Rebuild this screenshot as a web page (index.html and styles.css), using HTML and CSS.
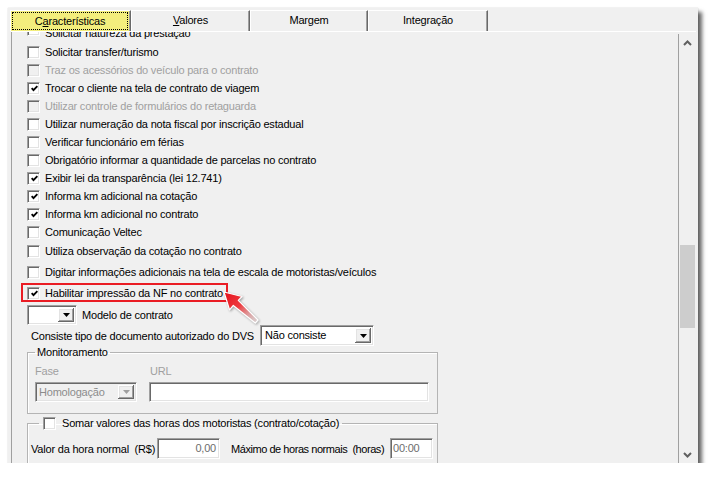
FILE: index.html
```html
<!DOCTYPE html>
<html lang="pt-BR">
<head>
<meta charset="utf-8">
<title>Características</title>
<link rel="stylesheet" href="styles.css">
</head>
<body>
<div class="window">
  <div class="tabs">
    <div class="tab active w1"><span class="focus">C<u>a</u>racterísticas</span></div>
    <div class="tab w2"><u>V</u>alores</div>
    <div class="tab w3">Margem</div>
    <div class="tab w4">Integração</div>
  </div>
  <div class="panel">
    <div class="viewport">
      <div class="content">
        <div class="row first"><span class="cb"></span><span class="t">Solicitar natureza da prestação</span></div>
        <div class="row"><span class="cb"></span><span>Solicitar transfer/turismo</span></div>
        <div class="row dis"><span class="cb off"></span><span>Traz os acessórios do veículo para o contrato</span></div>
        <div class="row"><span class="cb"><svg class="chk" viewBox="0 0 7 7"><polyline points="0.6,3.1 2.5,5.2 6.4,1.1"/></svg></span><span>Trocar o cliente na tela de contrato de viagem</span></div>
        <div class="row dis"><span class="cb off"></span><span>Utilizar controle de formulários do retaguarda</span></div>
        <div class="row"><span class="cb"></span><span>Utilizar numeração da nota fiscal por inscrição estadual</span></div>
        <div class="row"><span class="cb"></span><span>Verificar funcionário em férias</span></div>
        <div class="row"><span class="cb"></span><span>Obrigatório informar a quantidade de parcelas no contrato</span></div>
        <div class="row"><span class="cb"><svg class="chk" viewBox="0 0 7 7"><polyline points="0.6,3.1 2.5,5.2 6.4,1.1"/></svg></span><span>Exibir lei da transparência (lei 12.741)</span></div>
        <div class="row"><span class="cb"><svg class="chk" viewBox="0 0 7 7"><polyline points="0.6,3.1 2.5,5.2 6.4,1.1"/></svg></span><span>Informa km adicional na cotação</span></div>
        <div class="row"><span class="cb"><svg class="chk" viewBox="0 0 7 7"><polyline points="0.6,3.1 2.5,5.2 6.4,1.1"/></svg></span><span>Informa km adicional no contrato</span></div>
        <div class="row"><span class="cb"></span><span>Comunicação Veltec</span></div>
        <div class="row gap1"><span class="cb"></span><span>Utiliza observação da cotação no contrato</span></div>
        <div class="row gap3"><span class="cb"></span><span>Digitar informações adicionais na tela de escala de motoristas/veículos</span></div>
        <div class="row gap3"><span class="hl"><span class="cb"><svg class="chk" viewBox="0 0 7 7"><polyline points="0.6,3.1 2.5,5.2 6.4,1.1"/></svg></span><span>Habilitar impressão da NF no contrato</span></span></div>

        <div class="line modelo">
          <div class="combo c-modelo"><span class="val"></span><span class="btn"><svg class="tri" viewBox="0 0 7 4"><polygon points="0,0 7,0 3.5,4"/></svg></span></div>
          <span>Modelo de contrato</span>
        </div>
        <div class="line consiste">
          <span class="lbl-dvs">Consiste tipo de documento autorizado do DVS</span>
          <div class="combo c-dvs"><span class="val">Não consiste</span><span class="btn"><svg class="tri" viewBox="0 0 7 4"><polygon points="0,0 7,0 3.5,4"/></svg></span></div>
        </div>

        <fieldset class="group mon">
          <legend>Monitoramento</legend>
          <div class="mon-grid">
            <span class="dis">Fase</span>
            <span class="dis">URL</span>
            <div class="combo c-fase off"><span class="val">Homologação</span><span class="btn"><svg class="tri" viewBox="0 0 7 4"><polygon points="0,0 7,0 3.5,4"/></svg></span></div>
            <div class="input url"></div>
          </div>
        </fieldset>

        <fieldset class="group horas">
          <legend><span class="lg"><span class="cb"></span><span>Somar valores das horas dos motoristas (contrato/cotação)</span></span></legend>
          <div class="hrow">
            <span class="lbl1">Valor da hora normal&nbsp; (R$)</span>
            <div class="input num">0,00</div>
            <span class="lbl2">Máximo de horas normais&nbsp; (horas)</span>
            <div class="input hr">00:00</div>
          </div>
        </fieldset>
      </div>
    </div>
    <div class="scrollbar">
      <div class="sbtn"><svg class="chev" viewBox="0 0 9 6"><polyline points="1,5 4.5,1.5 8,5"/></svg></div>
      <div class="track"><div class="thumb"></div></div>
      <div class="sbtn"><svg class="chev" viewBox="0 0 9 6"><polyline points="1,1 4.5,4.5 8,1"/></svg></div>
    </div>
  </div>
  <svg class="arrow" viewBox="0 0 80 60" width="80" height="60">
    <defs>
      <linearGradient id="ag" gradientUnits="userSpaceOnUse" x1="24" y1="12" x2="58" y2="43">
        <stop offset="0" stop-color="#e4101c"/>
        <stop offset="0.45" stop-color="#ee3a3e"/>
        <stop offset="1" stop-color="#ffd4d4" stop-opacity="0.15"/>
      </linearGradient>
    </defs>
    <polygon points="24,12 42,16.5 38.3,20.3 58,40 55.3,43 33.3,25.5 29.5,29.8" fill="url(#ag)" stroke="#ffffff" stroke-width="1.2" stroke-linejoin="round"/>
  </svg>
</div>
</body>
</html>
```

FILE: styles.css
```css
html, body {
  margin: 0;
  padding: 0;
  background: #ffffff;
}

body {
  font-family: "Liberation Sans", Arial, sans-serif;
  font-size: 11px;
  letter-spacing: -0.2px;
  color: #000000;
}

.window {
  position: relative;
  margin: 8px 0 0 8px;
  width: 690px;
  height: 455px;
  background: #f0f0f0;
  box-shadow: 0 0 1px rgba(0, 0, 0, 0.25), 4px 4px 4px rgba(0, 0, 0, 0.6);
  display: flex;
  flex-direction: column;
}

/* Tabs */
.tabs {
  display: flex;
  height: 21px;
  padding: 2px 0 0 2px;
  flex: none;
}

.tab {
  box-sizing: border-box;
  height: 21px;
  border-left: 1px solid #ffffff;
  border-top: 1px solid #ffffff;
  border-right: 1px solid #696969;
  box-shadow: inset -1px 0 0 #a0a0a0;
  text-align: center;
  line-height: 19px;
}

.w1 { width: 121px; }
.w2 { width: 119px; }
.w3 { width: 118px; }
.w4 { width: 120px; }

.tab.active {
  background: #f3ee7d;
  padding: 1px 2px 1px 1px;
}

.focus {
  display: block;
  box-sizing: border-box;
  height: 100%;
  border: 1px dotted #000000;
  line-height: 16px;
}

/* Panel */
.panel {
  flex: 1;
  min-height: 0;
  display: flex;
  border-top: 1px solid #ffffff;
  margin: 0 2px 0 3px;
}

.viewport {
  width: 666px;
  flex: none;
  overflow: hidden;
  border-left: 1px solid #a0a0a0;
}

/* the list is scrolled: its first row lies partly above the visible area */
.content {
  margin-top: -11px;
  padding-left: 15px;
}

.row {
  display: flex;
  align-items: center;
  gap: 5px;
  height: 18px;
  line-height: 14px;
  white-space: nowrap;
}

.row.first {
  height: 22px;
  align-items: flex-start;
  padding-top: 2px;
  box-sizing: border-box;
}

.row.first .t { padding-top: 3px; }

.gap1 { margin-top: 1px; }
.gap3 { margin-top: 3px; }

.dis { color: #a0a0a0; }

.cb {
  box-sizing: border-box;
  width: 13px;
  height: 13px;
  flex: none;
  background: #ffffff;
  border: 1px solid;
  border-color: #a0a0a0 #ffffff #ffffff #a0a0a0;
  box-shadow: inset 1px 1px 0 #696969, inset -1px -1px 0 #e3e3e3;
  display: flex;
  align-items: center;
  justify-content: center;
}

.cb.off { background: #f0f0f0; }

.chk {
  width: 7px;
  height: 7px;
  margin: 0 0 0 1px;
}

.chk polyline {
  fill: none;
  stroke: #000000;
  stroke-width: 1.9;
}

.hl {
  position: relative;
  display: flex;
  align-items: center;
  gap: 5px;
}

.hl::after {
  content: "";
  position: absolute;
  left: -6px;
  top: -3px;
  width: 207px;
  height: 19px;
  box-sizing: border-box;
  border: 2px solid #ea1c24;
}

/* Combos and inputs */
.line {
  display: flex;
  align-items: center;
  white-space: nowrap;
}

.modelo {
  margin-top: 3px;
  height: 20px;
  gap: 5px;
}

.consiste {
  height: 21px;
  padding-left: 4px;
}

.lbl-dvs { width: 229px; }

.combo {
  box-sizing: border-box;
  display: flex;
  align-items: stretch;
  background: #ffffff;
  border: 1px solid;
  border-color: #a0a0a0 #ffffff #ffffff #a0a0a0;
  box-shadow: inset 1px 1px 0 #696969, inset -1px -1px 0 #e3e3e3;
  padding: 2px;
}

.combo .val {
  flex: 1;
  padding-left: 1px;
  line-height: 15px;
  white-space: nowrap;
  overflow: hidden;
}

.combo .btn {
  width: 16px;
  flex: none;
  background: #f0f0f0;
  box-shadow: inset -1px -1px 0 #696969, inset 1px 1px 0 #ffffff, inset -2px -2px 0 #a0a0a0, inset 2px 2px 0 #e3e3e3;
  display: flex;
  align-items: center;
  justify-content: center;
}

.tri {
  width: 7px;
  height: 4px;
}

.tri polygon { fill: #000000; }

.c-modelo { width: 50px; height: 20px; }
.c-dvs { width: 114px; height: 21px; }
.c-dvs .val { padding-left: 2px; }

.c-fase { width: 102px; height: 20px; }
.combo.off { background: #f0f0f0; }
.combo.off .val { color: #8c8c8c; }
.combo.off .tri polygon { fill: #a0a0a0; }

.input {
  box-sizing: border-box;
  background: #ffffff;
  border: 1px solid;
  border-color: #a0a0a0 #ffffff #ffffff #a0a0a0;
  box-shadow: inset 1px 1px 0 #696969, inset -1px -1px 0 #e3e3e3;
  height: 20px;
  line-height: 18px;
  padding: 0 3px;
  color: #6d6d6d;
}

.url { width: 280px; }

/* Group boxes */
.group {
  box-sizing: border-box;
  width: 411px;
  margin: 0;
  padding: 0;
  border: 1px solid #b4b4b4;
  box-shadow: inset 1px 1px 0 #ffffff;
  min-width: 0;
}

.group legend {
  line-height: 13px;
  padding: 0 2px;
  margin-left: 7px;
}

.mon-grid {
  display: grid;
  grid-template-columns: 102px 280px;
  column-gap: 12px;
  row-gap: 4px;
  margin-top: 6px;
  padding: 0 0 11px 7px;
  line-height: 13px;
}

.mon-grid .dis:nth-child(2) { padding-left: 1px; }

.horas {
  margin-top: 3px;
  padding-bottom: 20px;
}

.horas legend {
  margin-left: 11px;
  padding: 0 3px 0 4px;
}

.lg {
  display: flex;
  align-items: center;
  gap: 6px;
  height: 13px;
  white-space: nowrap;
}

.hrow {
  display: flex;
  align-items: center;
  margin-top: 8px;
  padding-left: 3px;
  white-space: nowrap;
}

.lbl1 { width: 126px; }

.lbl2 {
  width: 159px;
  margin-left: 11px;
  letter-spacing: -0.45px;
}

.num {
  width: 63px;
  height: 21px;
  line-height: 19px;
  text-align: right;
}

.hr {
  width: 43px;
  height: 21px;
  line-height: 19px;
  padding-left: 2px;
}

/* Scrollbar */
.scrollbar {
  width: 17px;
  flex: none;
  margin-top: 2px;
  border-left: 1px solid #a0a0a0;
  display: flex;
  flex-direction: column;
}

.sbtn {
  height: 17px;
  flex: none;
  display: flex;
  align-items: center;
  justify-content: center;
}

.chev {
  width: 9px;
  height: 6px;
}

.chev polyline {
  fill: none;
  stroke: #606060;
  stroke-width: 2;
}

.track {
  flex: 1;
}

.thumb {
  margin: 194px 1px 0 1px;
  height: 83px;
  background: #cdcdcd;
}

/* Annotation arrow */
.arrow {
  position: absolute;
  left: 192px;
  top: 272px;
  filter: drop-shadow(1px 1px 1px rgba(0, 0, 0, 0.35));
}
```
